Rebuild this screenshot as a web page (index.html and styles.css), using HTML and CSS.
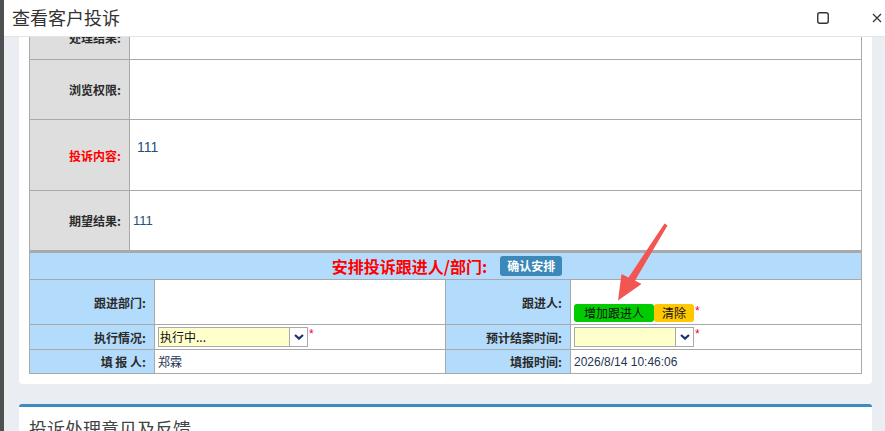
FILE: index.html
```html
<!DOCTYPE html>
<html lang="zh-CN">
<head>
<meta charset="utf-8">
<title>查看客户投诉</title>
<link rel="stylesheet" href="styles.css">
</head>
<body>
<div class="backdrop-edge"></div>
<div class="dialog">
  <div class="dialog-header">
    <div class="dialog-title">查看客户投诉</div>
    <div class="dialog-tools">
      <svg class="tool-max" width="14" height="14" viewBox="0 0 14 14"><rect x="1.75" y="1.75" width="10.5" height="10.5" rx="2" fill="none" stroke="#333" stroke-width="1.4"/></svg>
      <svg class="tool-close" width="12" height="12" viewBox="0 0 12 12"><path d="M2 2 L10 10 M10 2 L2 10" stroke="#333" stroke-width="1.2" fill="none"/></svg>
    </div>
  </div>
  <div class="dialog-body">
    <div class="scroll">
      <div class="panel">
        <table class="grid grid-info">
          <colgroup><col class="c-label"><col></colgroup>
          <tr class="r-result"><th>处理结果:</th><td></td></tr>
          <tr class="r-perm"><th>浏览权限:</th><td></td></tr>
          <tr class="r-content"><th class="warn">投诉内容:</th><td class="top"><div class="memo">111</div></td></tr>
          <tr class="r-expect"><th>期望结果:</th><td class="val-lg">111</td></tr>
        </table>
        <table class="grid grid-assign">
          <colgroup><col class="c-label2"><col class="c-val2"><col class="c-label2"><col></colgroup>
          <tr class="r-head">
            <td colspan="4">
              <div class="assign-head">
                <span class="assign-title">安排投诉跟进人/部门:</span>
                <button class="btn-confirm" type="button">确认安排</button>
              </div>
            </td>
          </tr>
          <tr class="r-follow">
            <th>跟进部门:</th><td></td>
            <th>跟进人:</th>
            <td class="bottom">
              <button class="btn-add" type="button">增加跟进人</button><button class="btn-clear" type="button">清除</button><span class="req">*</span>
            </td>
          </tr>
          <tr class="r-state">
            <th>执行情况:</th>
            <td>
              <div class="field">
                <div class="select sel-wide"><span class="select-value">执行中...</span><span class="select-caret"><svg width="10" height="6" viewBox="0 0 10 6"><path d="M1 1 L5 4.6 L9 1" stroke="#1b3470" stroke-width="2.2" fill="none"/></svg></span></div><span class="req">*</span>
              </div>
            </td>
            <th>预计结案时间:</th>
            <td>
              <div class="field">
                <div class="select sel-narrow"><span class="select-value"></span><span class="select-caret"><svg width="10" height="6" viewBox="0 0 10 6"><path d="M1 1 L5 4.6 L9 1" stroke="#1b3470" stroke-width="2.2" fill="none"/></svg></span></div><span class="req">*</span>
              </div>
            </td>
          </tr>
          <tr class="r-report">
            <th>填 报 人:</th><td class="val">郑霖</td>
            <th>填报时间:</th><td class="val">2026/8/14 10:46:06</td>
          </tr>
        </table>
      </div>
      <div class="panel panel-feedback">
        <div class="panel-title">投诉处理意见及反馈</div>
      </div>
    </div>
  </div>
</div>
<svg class="pointer-arrow" width="885" height="431" viewBox="0 0 885 431">
  <path d="M664.5 223.5 L667.5 225.5 L635 280.5 L641.5 284 L618 300.5 L621.5 274 L628.5 277.5 Z" fill="#f25552"/>
</svg>
</body>
</html>
```

FILE: styles.css
```css
html, body {
  margin: 0;
  padding: 0;
}

body {
  width: 885px;
  height: 431px;
  overflow: hidden;
  display: flex;
  position: relative;
  background: #4e4e4e;
  font-family: "Liberation Sans", "Noto Sans CJK SC", sans-serif;
  font-size: 12px;
  color: #333;
}

.backdrop-edge {
  width: 4px;
  flex: none;
  background: #4e5052;
}

.dialog {
  flex: 1;
  display: flex;
  flex-direction: column;
  background: #fff;
  min-width: 0;
}

.dialog-header {
  height: 36px;
  flex: none;
  border-bottom: 1px solid #e4e4e4;
  display: flex;
  align-items: center;
  padding-left: 8px;
}

.dialog-title {
  flex: 1;
  font-family: "Noto Sans CJK SC", sans-serif;
  font-size: 18px;
  color: #333;
  padding-bottom: 2px;
}

.dialog-tools {
  display: flex;
  align-items: center;
  gap: 41px;
  padding-right: 2px;
}

.tool-max, .tool-close {
  display: block;
}

.dialog-body {
  flex: 1;
  overflow: hidden;
  background: #eaedf1;
  padding: 0 13px 0 15px;
}

.scroll {
  margin-top: -33px;
}

.panel {
  background: #fff;
  border-radius: 4px;
  padding: 10px;
}

.panel + .panel {
  margin-top: 20px;
}

.panel-feedback {
  border-top: 3px solid #3c8dbc;
  border-radius: 3px;
  padding: 9px 10px;
}

.panel-title {
  font-family: "Noto Sans CJK SC", sans-serif;
  font-size: 18px;
  color: #444;
  line-height: 24px;
}

/* form tables */
.grid {
  width: 833px;
  border-collapse: collapse;
  table-layout: fixed;
}

.grid th, .grid td {
  border: 1px solid #a9a9a9;
  padding: 0 3px;
  vertical-align: middle;
}

.grid th {
  font-family: "Noto Sans CJK SC", sans-serif;
  font-weight: bold;
  font-size: 12px;
  text-align: right;
  padding-right: 8px;
  color: #2b2b2b;
}

.grid th.warn {
  color: #f00;
}

.grid-info th {
  background: #dedede;
}

.grid-info .c-label { width: 100px; }

.grid-info .r-result td, .grid-info .r-result th { height: 44px; }
.grid-info .r-perm td, .grid-info .r-perm th { height: 59px; }
.grid-info .r-content td, .grid-info .r-content th { height: 70px; }
.grid-info .r-expect td, .grid-info .r-expect th { height: 59px; }

td.top {
  vertical-align: top;
}

.memo {
  padding: 19px 4px 0 4px;
  font-size: 14px;
  color: #264f7a;
}

.val-lg {
  font-size: 13px;
  color: #264f7a;
}

.grid-assign {
  border-top: 2px solid #a9a9a9;
}

.grid-assign th {
  background: #b3dcfc;
}

.grid-assign .c-label2 { width: 125px; }
.grid-assign .c-val2 { width: 291px; }

.r-head td {
  background: #b3dcfc;
  height: 26px;
  padding: 0;
}

.assign-head {
  display: flex;
  justify-content: center;
  align-items: center;
  gap: 13px;
  padding-left: 3px;
}

.assign-title {
  font-family: "Noto Sans CJK SC", sans-serif;
  font-weight: bold;
  font-size: 16px;
  color: #f00;
}

.btn-confirm {
  font-family: "Noto Sans CJK SC", sans-serif;
  font-size: 12px;
  font-weight: bold;
  color: #fff;
  background: #3b88b9;
  border: none;
  border-radius: 3px;
  height: 20px;
  padding: 0 7px;
  line-height: 20px;
}

.r-follow td, .r-follow th { height: 44px; }
.r-follow td.bottom { height: 42px; }
.r-state td, .r-state th { height: 24px; }
.r-report td, .r-report th { height: 23px; }

td.bottom {
  vertical-align: bottom;
  padding-bottom: 2px;
}

.btn-add, .btn-clear {
  font-family: "Noto Sans CJK SC", sans-serif;
  font-size: 12px;
  color: #111;
  border: none;
  border-radius: 3px;
  height: 18px;
  line-height: 18px;
  vertical-align: bottom;
}

.btn-add {
  background: #00cc00;
  width: 80px;
  padding: 0;
}

.btn-clear {
  background: #ffc800;
  width: 40px;
  padding: 0;
}

.req {
  color: #f0003c;
  font-size: 12px;
  vertical-align: top;
  margin-left: 1px;
}

.field {
  display: flex;
  align-items: flex-start;
}

.select {
  display: flex;
  height: 18px;
  border: 1px solid #a9a9a9;
  background: #ffffcc;
}

.sel-wide { width: 148px; }
.sel-narrow { width: 118px; }

.select-value {
  flex: 1;
  font-family: "Noto Sans CJK SC", sans-serif;
  font-size: 12px;
  line-height: 18px;
  color: #111;
  padding-left: 1px;
}

.select-caret {
  width: 17px;
  background: #fff;
  border-left: 1px solid #a9a9a9;
  display: flex;
  align-items: center;
  justify-content: center;
}

.val {
  font-size: 12px;
  color: #1f3552;
}

.pointer-arrow {
  position: absolute;
  left: 0;
  top: 0;
  pointer-events: none;
}
```
